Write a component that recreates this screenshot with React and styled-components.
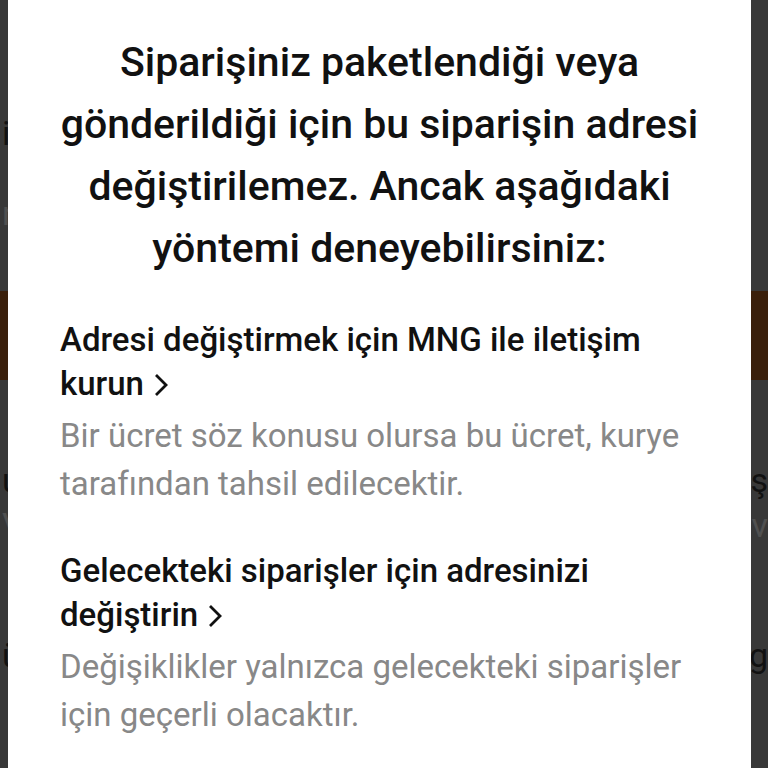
import React from 'react';
import styled, { createGlobalStyle } from 'styled-components';

const Global = createGlobalStyle`
  html, body { margin: 0; padding: 0; }
  body { font-family: Roboto, "Noto Sans", "Liberation Sans", sans-serif; }
`

const Screen = styled.div`
  position: relative;
  width: 768px;
  height: 768px;
  overflow: hidden;
  background: #383838;
`

const Backdrop = styled.div`
  display: flex;
  flex-direction: column;
  height: 100%;
`

const BackRow = styled.div`
  height: ${p => p.h}px;
  display: flex;
  align-items: center;
  justify-content: space-between;
  padding: 0 0 0 2px;
  font-size: 34px;
  color: ${p => p.dim ? '#505050' : '#111'};
  background: ${p => p.brown ? '#3a1f0b' : 'transparent'};
`

const Sheet = styled.div`
  position: absolute;
  top: 0;
  left: 8px;
  width: 743px;
  height: 800px;
  box-sizing: border-box;
  background: #fff;
  padding: 31px 52px 0;
`

const Title = styled.h1`
  margin: 0 0 39px;
  text-align: center;
  font-size: 41px;
  line-height: 62px;
  font-weight: 500;
  color: #111;
  white-space: nowrap;
`

const Option = styled.div`
  margin-bottom: 41px;
`

const OptionTitle = styled.div`
  font-size: 33px;
  line-height: 44px;
  font-weight: 500;
  color: #111;
  margin-bottom: 6px;
`

const OptionNote = styled.div`
  font-size: 33px;
  line-height: 48px;
  color: #888;
`

const Chevron = () => (
  <svg width="18" height="24" viewBox="0 0 18 24" style={{ marginLeft: 8, verticalAlign: -2 }}>
    <path d="M4 2 L14 12 L4 22" fill="none" stroke="#111" strokeWidth="2.8" strokeLinejoin="miter" />
  </svg>
)

export default function App() {
  return (
    <Screen>
      <Global />
      <Backdrop>
        <BackRow h={108} />
        <BackRow h={50}><span>i</span><span /></BackRow>
        <BackRow h={110} dim><span>n</span><span /></BackRow>
        <BackRow h={23} />
        <BackRow h={89} brown />
        <BackRow h={80} />
        <BackRow h={40}><span>u</span><span>iş</span></BackRow>
        <BackRow h={50} dim><span>V</span><span>v</span></BackRow>
        <BackRow h={80} />
        <BackRow h={50}><span>ü</span><span>g</span></BackRow>
        <BackRow h={88} />
      </Backdrop>
      <Sheet>
        <Title>
          Siparişiniz paketlendiği veya<br />
          gönderildiği için bu siparişin adresi<br />
          değiştirilemez. Ancak aşağıdaki<br />
          yöntemi deneyebilirsiniz:
        </Title>
        <Option>
          <OptionTitle>Adresi değiştirmek için MNG ile iletişim kurun<Chevron /></OptionTitle>
          <OptionNote>Bir ücret söz konusu olursa bu ücret, kurye tarafından tahsil edilecektir.</OptionNote>
        </Option>
        <Option>
          <OptionTitle>Gelecekteki siparişler için adresinizi değiştirin<Chevron /></OptionTitle>
          <OptionNote>Değişiklikler yalnızca gelecekteki siparişler için geçerli olacaktır.</OptionNote>
        </Option>
      </Sheet>
    </Screen>
  );
}
